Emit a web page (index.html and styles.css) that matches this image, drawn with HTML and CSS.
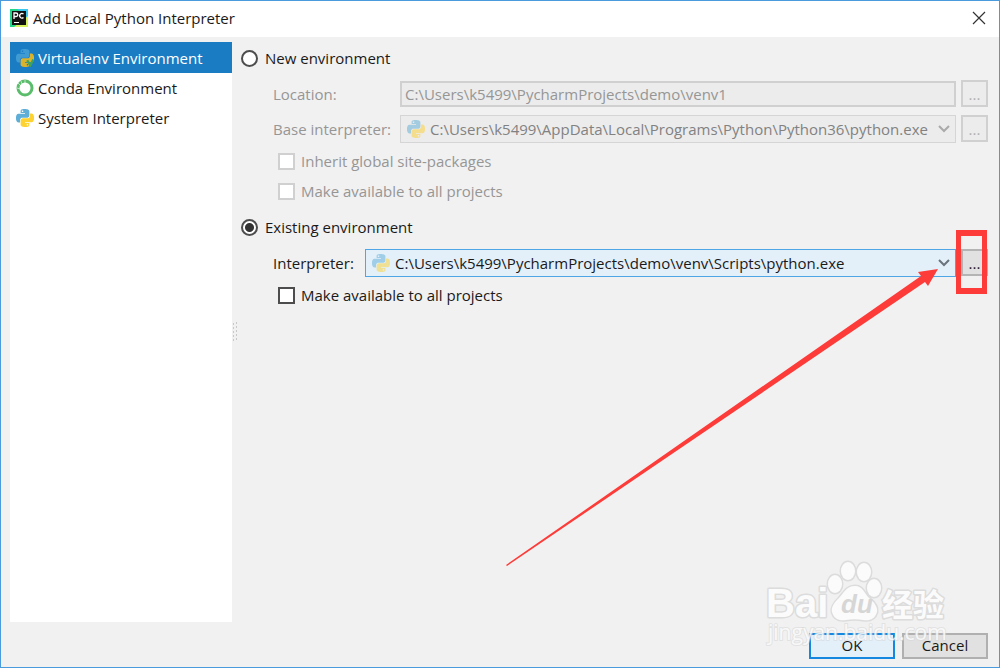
FILE: index.html
```html
<!DOCTYPE html>
<html lang="en">
<head>
    <meta charset="UTF-8">
    <title>Add Local Python Interpreter</title>
    <link rel="stylesheet" href="styles.css">
</head>
<body>
<svg class="defs" aria-hidden="true">
    <symbol id="snake" viewBox="0 0 24 24">
        <path d="M14.25.18l.9.2.73.26.59.3.45.32.34.34.25.34.16.33.1.3.04.26.02.2-.01.13V8.5l-.05.63-.13.55-.21.46-.26.38-.3.31-.33.25-.35.19-.35.14-.33.1-.3.07-.26.04-.21.02H8.77l-.69.05-.59.14-.5.22-.41.27-.33.32-.27.35-.2.36-.15.37-.1.35-.07.32-.04.27-.02.21v3.06H3.17l-.21-.03-.28-.07-.32-.12-.35-.18-.36-.26-.36-.36-.35-.46-.32-.59-.28-.73-.21-.88-.14-1.05-.05-1.23.06-1.22.16-1.04.24-.87.32-.71.36-.57.4-.44.42-.33.42-.24.4-.16.36-.1.32-.05.24-.01h.16l.06.01h8.16v-.83H6.18l-.01-2.75-.02-.37.05-.34.11-.31.17-.28.25-.26.31-.23.38-.2.44-.18.51-.15.58-.12.64-.1.71-.06.77-.04.84-.02 1.27.05zm-6.3 1.98l-.23.33-.08.41.08.41.23.34.33.22.41.09.41-.09.33-.22.23-.34.08-.41-.08-.41-.23-.33-.33-.22-.41-.09-.41.09z"/>
    </symbol>
    <symbol id="python" viewBox="0 0 24 24">
        <use href="#snake" width="24" height="24" fill="#5faed8"/>
        <use href="#snake" width="24" height="24" fill="#fdd231" transform="rotate(180 12 12)"/>
    </symbol>
</svg>

<div class="dialog">
    <header class="titlebar">
        <svg class="logo" viewBox="0 0 18 18">
            <path d="M0 0h18v18H0z" fill="#21d789"/>
            <path d="M7 0h11v10z" fill="#3cc8ee"/>
            <path d="M18 7v11H4z" fill="#d8f05a"/>
            <rect x="2" y="2" width="14" height="14" fill="#111"/>
            <path d="M4 10V4h2a1.700 1.700 0 0 1 0 3.500H4M13.500 5a2.300 2.300 0 1 0 0 3.500" fill="none" stroke="#fff" stroke-width="1.300"/>
            <path d="M4 13.500h5" stroke="#fff" stroke-width="1"/>
        </svg>
        <h1>Add Local Python Interpreter</h1>
        <button class="close" aria-label="Close">
            <svg viewBox="0 0 14 14"><path d="M1 1l12 12M13 1L1 13" stroke="#333" stroke-width="1.200"/></svg>
        </button>
    </header>

    <div class="content">
        <nav class="sidebar">
            <a href="#" class="current">
                <svg class="icon" viewBox="0 0 24 24">
                    <use href="#snake" width="24" height="24" fill="#3f9bd2"/>
                    <use href="#snake" width="24" height="24" fill="#d9b32c" transform="rotate(180 12 12)"/>
                    <path d="M15 15l4 7 4-8" fill="none" stroke="#3fa35a" stroke-width="3"/>
                </svg>
                Virtualenv Environment
            </a>
            <a href="#">
                <svg class="icon" viewBox="0 0 18 18">
                    <circle cx="9" cy="9" r="7" fill="none" stroke="#5bbd6c" stroke-width="3"/>
                    <path d="M2 4l3 3M1 9l3 1M5 2l1 3M9 1v3" stroke="#fff" stroke-width=".6"/>
                </svg>
                Conda Environment
            </a>
            <a href="#">
                <svg class="icon"><use href="#python"/></svg>
                System Interpreter
            </a>
        </nav>

        <div class="splitter">
            <svg viewBox="0 0 6 20">
                <path d="M1 2h1M4 1h1M1 6h1M4 5h1M1 10h1M4 9h1M1 14h1M4 13h1M1 18h1M4 17h1" stroke="#c8c8c8" stroke-width="2"/>
            </svg>
        </div>

        <main class="panel">
            <label class="option"><input type="radio" name="env">New environment</label>
            <div class="group disabled">
                <div class="field">
                    <label class="wide" for="location">Location:</label>
                    <input type="text" id="location" value="C:\Users\k5499\PycharmProjects\demo\venv1" disabled>
                    <button class="browse" aria-label="Browse location" disabled>...</button>
                </div>
                <div class="field">
                    <label class="wide" for="base">Base interpreter:</label>
                    <div class="combo">
                        <svg class="icon"><use href="#python"/></svg>
                        <select id="base" disabled>
                            <option>C:\Users\k5499\AppData\Local\Programs\Python\Python36\python.exe</option>
                        </select>
                        <svg class="arrow" viewBox="0 0 12 8"><path d="M1 1l5 5 5-5"/></svg>
                    </div>
                    <button class="browse" aria-label="Browse base interpreter" disabled>...</button>
                </div>
                <label class="check"><input type="checkbox" disabled>Inherit global site-packages</label>
                <label class="check"><input type="checkbox" disabled>Make available to all projects</label>
            </div>

            <label class="option"><input type="radio" name="env" checked>Existing environment</label>
            <div class="group">
                <div class="field">
                    <label for="interpreter">Interpreter:</label>
                    <div class="combo active">
                        <svg class="icon"><use href="#python"/></svg>
                        <select id="interpreter">
                            <option>C:\Users\k5499\PycharmProjects\demo\venv\Scripts\python.exe</option>
                        </select>
                        <svg class="arrow" viewBox="0 0 12 8"><path d="M1 1l5 5 5-5"/></svg>
                    </div>
                    <button class="browse" aria-label="Browse interpreter">...</button>
                </div>
                <label class="check"><input type="checkbox">Make available to all projects</label>
            </div>
        </main>
    </div>

    <footer class="buttons">
        <button class="ok">OK</button>
        <button>Cancel</button>
    </footer>

    <!-- red arrow and frame round the browse button -->
    <svg class="pointer" viewBox="0 0 500 350" aria-hidden="true">
        <path d="M6 345L421 56l-3-4 20-3-10 17-3-4L7 346z" fill="#fd3b38"/>
        <path d="M456 10h31v64h-31zM461 16v52h21V16z" fill="#fd3b38" fill-rule="evenodd"/>
    </svg>

    <svg class="watermark" viewBox="0 0 190 96" aria-hidden="true">
        <g class="mark">
            <text x="1" y="59" class="brand">Bai</text>
            <ellipse cx="70" cy="26" rx="7" ry="9"/>
            <ellipse cx="83" cy="13" rx="7" ry="9"/>
            <ellipse cx="99" cy="14" rx="7" ry="9"/>
            <ellipse cx="109" cy="30" rx="7" ry="9"/>
            <path d="M90 28c-9 0-11 7-16 12-5 5-8 9-7 14 2 7 7 9 14 8 6-1 11-1 17 0 7 1 12-1 14-8 1-5-3-10-8-14-5-5-6-12-14-12z"/>
            <text x="117" y="58" class="cjk">经验</text>
        </g>
        <text x="76" y="55" class="du">du</text>
        <text x="3" y="82" class="site">jingyan.baidu.com</text>
    </svg>
</div>
</body>
</html>
```
FILE: styles.css
```css
*{
    margin: 0;
    padding: 0;
    box-sizing: border-box;
}
body,input,select,button{
    font-family: "Open Sans", "Noto Sans CJK SC", sans-serif;
    font-size: 15px;
    color: #1a1a1a;
}
a{
    color: inherit;
    text-decoration: none;
}
.defs{
    position: absolute;
    width: 0;
    height: 0;
}
.dialog{
    position: relative;
    display: flex;
    flex-direction: column;
    min-height: 100vh;
    border: 1px solid #4a9ade;
    background-color: #f1f1f1;
    overflow: hidden;
}

/* title bar */
.titlebar{
    display: flex;
    align-items: center;
    height: 36px;
    padding: 0 12px 2px 9px;
    background-color: #fff;
}
.titlebar .logo{
    width: 18px;
    height: 18px;
    margin-right: 5px;
}
.titlebar h1{
    flex: 1;
    font-size: 15px;
    font-weight: normal;
}
.titlebar .close{
    width: 16px;
    height: 16px;
    border: 0;
    background: none;
}
.titlebar .close svg{
    display: block;
    width: 14px;
    height: 14px;
    margin: 1px;
}

.content{
    flex: 1;
    display: flex;
    padding: 5px 11px 0 9px;
}
.icon{
    width: 18px;
    height: 18px;
    flex-shrink: 0;
}

/* left list */
.sidebar{
    width: 222px;
    background-color: #fff;
}
.sidebar a{
    display: flex;
    align-items: center;
    gap: 4px;
    height: 30px;
    padding-left: 6px;
}
.sidebar .current{
    height: 31px;
    color: #fff;
    background-color: #1a7dc4;
}
.splitter{
    display: flex;
    align-items: center;
    width: 9px;
}
.splitter svg{
    width: 6px;
    height: 20px;
}

/* right side */
.panel{
    flex: 1;
    min-width: 0;
}
.option{
    display: flex;
    align-items: center;
    gap: 7px;
    height: 32px;
}
.group{
    padding: 2px 0 5px 32px;
}
.field{
    display: flex;
    align-items: center;
    gap: 5px;
    height: 35px;
}
.field label{
    width: 87px;
    white-space: nowrap;
}
.field .wide{
    width: 122px;
}
.field input{
    flex: 1;
    min-width: 0;
    height: 26px;
    padding: 0 3px;
    border: 2px solid #d0d0d0;
    background-color: #ececec;
}
.combo{
    position: relative;
    flex: 1;
    min-width: 0;
}
.combo select{
    display: block;
    width: 100%;
    height: 28px;
    padding: 0 22px 0 29px;
    border: 1px solid #d5d5d5;
    border-radius: 0;
    background-color: #ececec;
    appearance: none;
}
.combo .icon{
    position: absolute;
    left: 7px;
    top: 5px;
    opacity: .5;
}
.combo .arrow{
    position: absolute;
    right: 6px;
    top: 10px;
    width: 12px;
    height: 8px;
    fill: none;
    stroke: #6b737b;
    stroke-width: 2;
    pointer-events: none;
}
.combo.active select{
    border-color: #4fa6e6;
    background-color: #e3f0fa;
}
.browse{
    width: 27px;
    height: 27px;
    border: 2px solid #b4b4b4;
    background-color: #e1e1e1;
}
.check{
    display: flex;
    align-items: center;
    gap: 6px;
    height: 30px;
    padding-left: 5px;
}
input[type="radio"],
input[type="checkbox"]{
    appearance: none;
    width: 17px;
    height: 17px;
    border: 2px solid #4d4d4d;
    background-color: #fff;
}
input[type="radio"]{
    border-radius: 50%;
}
input[type="radio"]:checked{
    background: radial-gradient(circle, #333 4px, #fff 5px);
}
.disabled,
.disabled input{
    color: #969696;
}
.disabled select{
    color: #828282;
    opacity: 1;
}
.disabled .arrow{
    stroke: #aaa;
}
.disabled .browse{
    color: #b0b0b0;
    border-color: #d0d0d0;
    background-color: #ececec;
}
.disabled input[type="checkbox"]{
    border-color: #d0d0d0;
}

/* bottom buttons */
.buttons{
    display: flex;
    justify-content: flex-end;
    gap: 7px;
    padding: 11px 11px 8px;
}
.buttons button{
    width: 86px;
    height: 26px;
    line-height: 20px;
    padding-bottom: 2px;
    border: 2px solid #b0b0b0;
    background-color: #e1e1e1;
}
.buttons .ok{
    border-color: #1488e0;
    background-color: #e3f0fa;
}

.pointer{
    position: absolute;
    right: -1px;
    top: 219px;
    width: 500px;
    height: 350px;
    pointer-events: none;
}

/* watermark */
.watermark{
    position: absolute;
    right: 44px;
    bottom: 13px;
    width: 190px;
    height: 96px;
    pointer-events: none;
}
.watermark .mark{
    fill: #fbfbfb;
    stroke: #dcdcdc;
    stroke-width: 3;
    stroke-linejoin: round;
    paint-order: stroke;
}
.watermark text{
    font-family: "Liberation Sans", "Noto Sans CJK SC", sans-serif;
    font-weight: bold;
}
.watermark .brand{
    font-size: 40px;
}
.watermark .cjk{
    font-size: 31px;
}
.watermark .du{
    font-size: 26px;
    font-style: italic;
    fill: #d6d6d6;
}
.watermark .site{
    font-family: "Open Sans", sans-serif;
    font-size: 21px;
    font-weight: normal;
    fill: #fff;
    fill-opacity: .8;
    stroke: #d4d4d4;
    stroke-width: 2;
    stroke-opacity: .5;
    paint-order: stroke;
}
```
